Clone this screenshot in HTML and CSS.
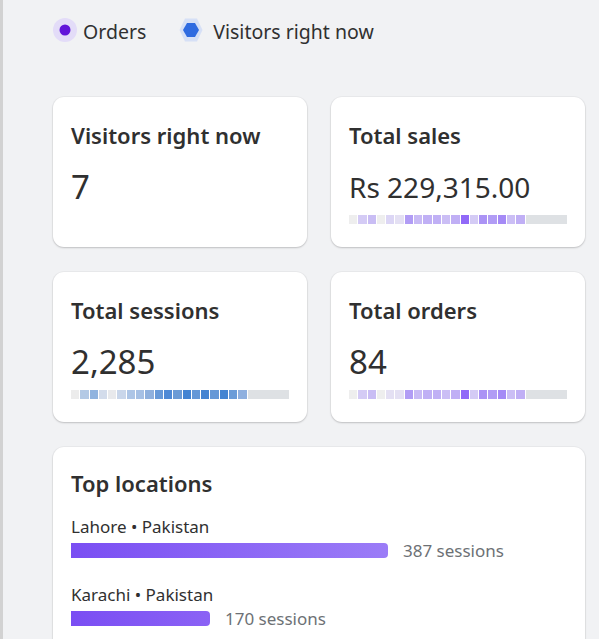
FILE: index.html
```html
<!DOCTYPE html>
<html lang="en">
<head>
<meta charset="utf-8">
<title>Live view</title>
<link rel="stylesheet" href="styles.css">
</head>
<body>
<main class="page">
  <div class="legend">
    <div class="legend-item">
      <svg class="marker" width="24" height="24" viewBox="0 0 24 24"><circle cx="12" cy="12" r="12" fill="#e3dcf8"/><circle cx="12" cy="12" r="5.5" fill="#6114d9"/></svg>
      <span class="legend-label">Orders</span>
    </div>
    <div class="legend-item legend-item-hex">
      <svg class="marker" width="24" height="24" viewBox="0 0 24 24"><polygon points="6,0.5 18,0.5 23.5,12 18,23.5 6,23.5 0.5,12" fill="#d6e0f6"/><polygon points="8,5 16,5 20,12 16,19 8,19 4,12" fill="#2f6be0"/></svg>
      <span class="legend-label">Visitors right now</span>
    </div>
  </div>

  <div class="grid">
    <section class="card">
      <h2 class="card-title">Visitors right now</h2>
      <div class="value">7</div>
    </section>
    <section class="card">
      <h2 class="card-title">Total sales</h2>
      <div class="value value-long">Rs 229,315.00</div>
      <div class="spark">
        <i style="background:#eeeeee"></i><i style="background:#d4cbf5"></i><i style="background:#c9bdf4"></i><i style="background:#eeeeee"></i><i style="background:#dcd6f5"></i><i style="background:#e4e0f3"></i><i style="background:#b19cf5"></i><i style="background:#c8baf5"></i><i style="background:#c0b0f5"></i><i style="background:#c0b0f5"></i><i style="background:#cbbef5"></i><i style="background:#c0aff5"></i><i style="background:#9169f8"></i><i style="background:#d4cbf5"></i><i style="background:#ab93f5"></i><i style="background:#b19cf5"></i><i style="background:#a58af6"></i><i style="background:#cbbef5"></i><i style="background:#c0aff5"></i>
        <b class="rest"></b>
      </div>
    </section>
    <section class="card">
      <h2 class="card-title">Total sessions</h2>
      <div class="value">2,285</div>
      <div class="spark">
        <i style="background:#ececec"></i><i style="background:#b3c9e5"></i><i style="background:#90b3df"></i><i style="background:#d3dceb"></i><i style="background:#e8e9ec"></i><i style="background:#c9d6ea"></i><i style="background:#adc5e6"></i><i style="background:#a6c0e4"></i><i style="background:#8fb0dd"></i><i style="background:#6799d8"></i><i style="background:#4f8ad6"></i><i style="background:#6b9bd6"></i><i style="background:#4384d3"></i><i style="background:#6598d7"></i><i style="background:#4584d2"></i><i style="background:#6598d7"></i><i style="background:#4384d2"></i><i style="background:#6b9cd8"></i><i style="background:#8fb0df"></i>
        <b class="rest"></b>
      </div>
    </section>
    <section class="card">
      <h2 class="card-title">Total orders</h2>
      <div class="value">84</div>
      <div class="spark">
        <i style="background:#eeeeee"></i><i style="background:#d4cbf5"></i><i style="background:#c9bdf4"></i><i style="background:#eeeeee"></i><i style="background:#e4e0f3"></i><i style="background:#e4e0f3"></i><i style="background:#b19cf5"></i><i style="background:#c8baf5"></i><i style="background:#c0b0f5"></i><i style="background:#c0b0f5"></i><i style="background:#cbbef5"></i><i style="background:#c0aff5"></i><i style="background:#9169f8"></i><i style="background:#d4cbf5"></i><i style="background:#ab93f5"></i><i style="background:#b19cf5"></i><i style="background:#a58af6"></i><i style="background:#cbbef5"></i><i style="background:#c0aff5"></i>
        <b class="rest"></b>
      </div>
    </section>
    <section class="card card-wide">
      <h2 class="card-title">Top locations</h2>
      <div class="loc">
        <div class="loc-name">Lahore • Pakistan</div>
        <div class="loc-row">
          <div class="loc-bar loc-bar-1" style="width:317px"></div>
          <span class="loc-count">387 sessions</span>
        </div>
      </div>
      <div class="loc">
        <div class="loc-name">Karachi • Pakistan</div>
        <div class="loc-row">
          <div class="loc-bar loc-bar-2" style="width:139px"></div>
          <span class="loc-count">170 sessions</span>
        </div>
      </div>
    </section>
  </div>
</main>
</body>
</html>
```
FILE: styles.css
```css
html, body {
  margin: 0;
  padding: 0;
}
body {
  background: #f1f2f4;
  font-family: "Noto Sans", "Open Sans", sans-serif;
  color: #303030;
  height: 639px;
  overflow: hidden;
  border-left: 3px solid #d2d2d2;
  box-sizing: border-box;
}
.page {
  padding: 18px 14px 0 50px;
}
.legend {
  display: flex;
  align-items: center;
  gap: 33px;
  height: 24px;
}
.legend-item {
  display: flex;
  align-items: center;
  gap: 6px;
  font-size: 19.5px;
  color: #303030;
}
.legend-item-hex {
  gap: 10px;
}
.legend-label {
  padding-top: 3px;
}
.marker {
  display: block;
  flex: none;
}
.grid {
  margin-top: 55px;
  display: grid;
  grid-template-columns: 254px 254px;
  grid-auto-rows: 150px;
  gap: 25px 24px;
}
.card {
  background: #ffffff;
  border-radius: 11px;
  box-shadow: 0 1px 2px rgba(0,0,0,0.18), 0 0 0 1px rgba(0,0,0,0.03);
  padding: 23px 18px 0 18px;
  box-sizing: border-box;
  display: flex;
  flex-direction: column;
}
.card-wide {
  grid-column: 1 / span 2;
  height: 220px;
  padding-top: 21px;
}
.card-title {
  margin: 0;
  font-size: 22px;
  font-weight: 600;
  line-height: 30px;
  color: #303030;
}
.value {
  margin-top: 15px;
  font-size: 33px;
  font-weight: 400;
  line-height: 44px;
  height: 44px;
  color: #303030;
}
.value-long {
  font-size: 28px;
}
.spark {
  margin-top: 6px;
  display: flex;
  gap: 1px;
  height: 9px;
  width: 218px;
}
.spark i {
  flex: 0 0 8.3px;
  display: block;
}
.spark .rest {
  flex: 1;
  background: #dee1e4;
}
.loc {
  margin-top: 17px;
}
.loc + .loc {
  margin-top: 21px;
}
.loc-name {
  font-size: 17px;
  line-height: 24px;
  color: #303030;
}
.loc-row {
  display: flex;
  align-items: center;
  gap: 15px;
}
.loc-bar {
  height: 15px;
  border-radius: 0 4px 4px 0;
}
.loc-bar-1 {
  background: linear-gradient(90deg, #7a4ef3, #9b7cf7);
}
.loc-bar-2 {
  background: linear-gradient(90deg, #7a4ef3, #8b62f5);
}
.loc-count {
  font-size: 17px;
  color: #6d7175;
}
```
